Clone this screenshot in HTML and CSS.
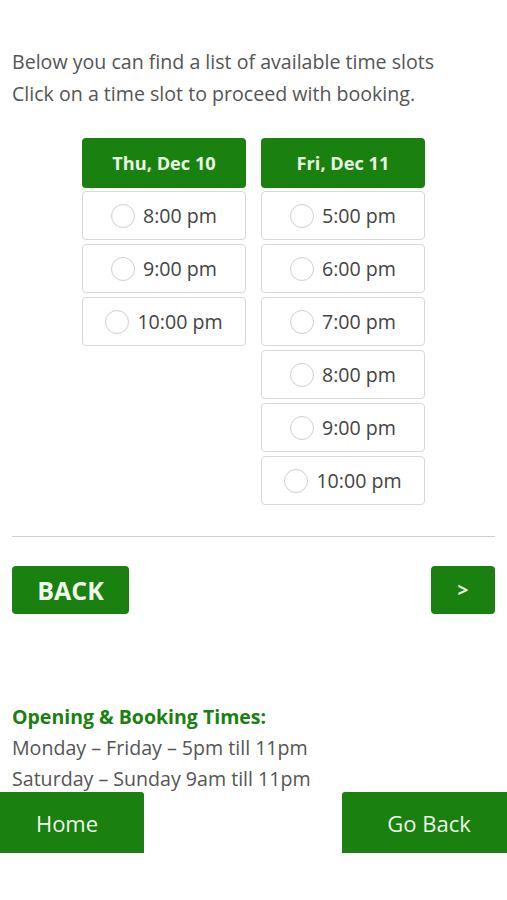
FILE: index.html
```html
<!DOCTYPE html>
<html lang="en">
<head>
  <meta charset="UTF-8">
  <meta name="viewport" content="width=device-width, initial-scale=1.0">
  <title>Book a Time Slot</title>
  <link rel="stylesheet" href="styles.css">
</head>
<body>

<div class="page">
  <p class="intro">Below you can find a list of available time slots<br>Click on a time slot to proceed with booking.</p>

  <div class="slots">
    <div class="day">
      <div class="day-head">Thu, Dec 10</div>
      <label class="slot"><span class="radio"></span>8:00 pm</label>
      <label class="slot"><span class="radio"></span>9:00 pm</label>
      <label class="slot"><span class="radio"></span>10:00 pm</label>
    </div>
    <div class="day">
      <div class="day-head">Fri, Dec 11</div>
      <label class="slot"><span class="radio"></span>5:00 pm</label>
      <label class="slot"><span class="radio"></span>6:00 pm</label>
      <label class="slot"><span class="radio"></span>7:00 pm</label>
      <label class="slot"><span class="radio"></span>8:00 pm</label>
      <label class="slot"><span class="radio"></span>9:00 pm</label>
      <label class="slot"><span class="radio"></span>10:00 pm</label>
    </div>
  </div>

  <hr class="divider">

  <div class="nav">
    <button class="btn btn-back">BACK</button>
    <button class="btn btn-next">&gt;</button>
  </div>

  <div class="hours">
    <h4>Opening &amp; Booking Times:</h4>
    <p>Monday – Friday – 5pm till 11pm<br>Saturday – Sunday 9am till 11pm</p>
  </div>
</div>

<div class="footer">
  <a class="foot-btn foot-home" href="#">Home</a>
  <a class="foot-btn foot-back" href="#">Go Back</a>
</div>

</body>
</html>
```

FILE: styles.css
```css
* {
  box-sizing: border-box;
}
body {
  margin: 0;
  padding: 0;
  font-family: "Open Sans", Arial, sans-serif;
  background-color: #fff;
  color: #555;
}
.page {
  padding: 46px 12px 0 12px;
}
.intro {
  margin: 0;
  font-size: 19.6px;
  line-height: 32px;
  color: #555;
}
.slots {
  display: flex;
  justify-content: center;
  gap: 15px;
  margin-top: 28px;
}
.day {
  width: 164px;
  display: flex;
  flex-direction: column;
  gap: 4px;
}
.day-head {
  height: 50px;
  background-color: #1a800f;
  color: #eaf6e4;
  border-radius: 4px;
  font-weight: bold;
  font-size: 18.2px;
  display: flex;
  align-items: center;
  justify-content: center;
  margin-bottom: -1px;
}
.slot {
  height: 49px;
  border: 1px solid #d8d8d8;
  border-radius: 4px;
  display: flex;
  align-items: center;
  justify-content: center;
  gap: 8px;
  font-size: 19.6px;
  color: #444;
  cursor: pointer;
}
.radio {
  width: 24px;
  height: 24px;
  border: 1.5px solid #cfcfcf;
  border-radius: 50%;
}
.divider {
  border: none;
  border-top: 1.5px solid #d0d0d0;
  margin: 31px 0 0 0;
}
.nav {
  display: flex;
  justify-content: space-between;
  margin-top: 29px;
}
.btn {
  height: 48px;
  border: none;
  border-radius: 4px;
  background-color: #1a800f;
  color: #f0f8ec;
  font-family: "Open Sans", Arial, sans-serif;
  font-weight: bold;
  font-size: 25px;
  cursor: pointer;
}
.btn-back {
  width: 117px;
}
.btn-next {
  width: 64px;
  font-size: 19px;
}
.hours {
  margin-top: 87px;
}
.hours h4 {
  margin: 0;
  color: #1a800f;
  font-size: 19.5px;
  line-height: 31px;
}
.hours p {
  margin: 0;
  font-size: 19.6px;
  line-height: 31px;
  color: #555;
}
.footer {
  display: flex;
  justify-content: space-between;
  margin-top: -2px;
}
.foot-btn {
  height: 61px;
  background-color: #1a800f;
  color: #eef7ea;
  font-size: 22px;
  text-decoration: none;
  display: flex;
  align-items: center;
  justify-content: center;
}
.foot-home {
  width: 144px;
  padding-right: 10px;
  border-top-right-radius: 3px;
}
.foot-back {
  width: 165px;
  padding-left: 9px;
  border-top-left-radius: 3px;
}
```
